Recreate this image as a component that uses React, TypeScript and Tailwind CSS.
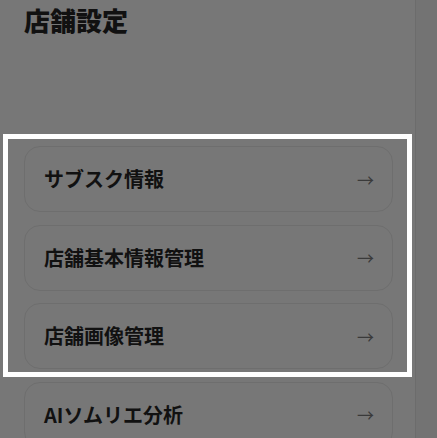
import React from "react";

const items = ["サブスク情報", "店舗基本情報管理", "店舗画像管理", "AIソムリエ分析"];

export default function App() {
  return (
    <div
      className="relative flex h-[438px] w-[437px] overflow-hidden bg-[#777777]"
      style={{ fontFamily: '"Noto Sans CJK JP", "Noto Sans", sans-serif' }}
    >
      <main className="flex w-[415px] flex-col pl-6 pr-[22px] pt-[2px]">
        <h1 className="text-[26px] font-black leading-[36px] text-[#111111]">店舗設定</h1>
        <div className="mt-[108px] flex flex-col gap-[12.5px]">
          {items.map((t) => (
            <div
              key={t}
              className="flex h-[66px] shrink-0 items-center justify-between rounded-2xl border border-[#6e6e6e] pl-[19px] pr-[18px]"
            >
              <span className="text-xl font-bold text-[#111111]">{t}</span>
              <span className="text-[17px] leading-none text-[#3a3a3a]">→</span>
            </div>
          ))}
        </div>
      </main>
      <aside className="flex-1 border-l border-[#6c6c6c] bg-[#737373]" />
      <div className="pointer-events-none absolute left-[3px] top-[134px] h-[243px] w-[409px] border-[5px] border-white" />
    </div>
  );
}
